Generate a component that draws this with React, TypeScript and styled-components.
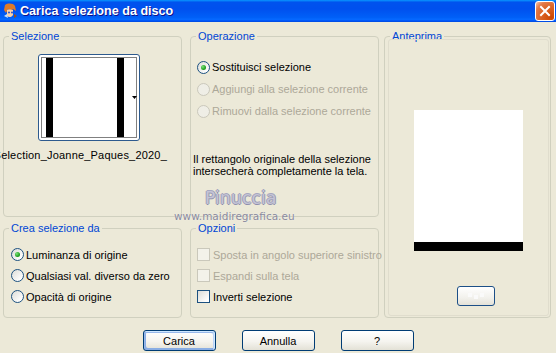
import React from 'react';
import styled, { createGlobalStyle, css } from 'styled-components';

const Global = createGlobalStyle`
  html, body { margin: 0; padding: 0; background: #ECE9D8; }
  body { font-family: "Liberation Sans", Arial, sans-serif; font-size: 11px; color: #000; }
`;

const Window = styled.div`
  position: relative;
  width: 556px;
  height: 353px;
  overflow: hidden;
  background: #ECE9D8;
  display: flex;
  flex-direction: column;
`;

const TitleBar = styled.div`
  flex: none;
  height: 22px;
  display: flex;
  align-items: center;
  padding: 0 1px 0 2px;
  background: linear-gradient(180deg, #0997ff 0%, #0053ee 10%, #0050ee 40%, #0060f8 80%, #066aff 88%, #005bff 92%, #0048dd 100%);
`;

const TitleIcon = styled.svg`
  width: 16px;
  height: 16px;
  flex: none;
`;

const TitleText = styled.span`
  margin-left: 2px;
  font-family: "Liberation Sans", Arial, sans-serif;
  font-weight: bold;
  font-size: 12.6px;
  color: #fff;
  text-shadow: 1px 1px #0f1089;
  white-space: nowrap;
`;

const CloseButton = styled.div`
  margin-left: auto;
  width: 20px;
  height: 20px;
  box-sizing: border-box;
  border: 1px solid #fff;
  border-radius: 3px;
  background: radial-gradient(circle at 85% 85%, #cc4600 0%, #dc6527 50%, #e27a4a 75%, #f3b89a 95%);
  display: flex;
  align-items: center;
  justify-content: center;
`;

const Body = styled.div`
  flex: 1;
  display: flex;
  flex-direction: column;
`;

const Panels = styled.div`
  display: grid;
  grid-template-columns: 179px 8px 189px 5px 167px;
  grid-template-rows: 187px 96px;
  row-gap: 5px;
  margin: 8px 0 0 3px;
`;

const Group = styled.fieldset<{ $col: number; $row: string }>`
  grid-column: ${p => p.$col};
  grid-row: ${p => p.$row};
  margin: 0;
  padding: 0;
  min-width: 0;
  box-sizing: border-box;
  border: 1px solid #d0d0bf;
  border-radius: 4px;
  display: flex;
  flex-direction: column;
`;

const Legend = styled.legend`
  margin-left: 5px;
  padding: 0 2px;
  color: #0046d5;
  font-size: 11px;
  line-height: 13px;
`;

const Thumb = styled.div`
  margin: 11px 0 0 34px;
  width: 102px;
  height: 87px;
  box-sizing: border-box;
  border: 1px solid #2d5a8e;
  border-radius: 3px;
  background: #fff;
  display: flex;
`;

const FileName = styled.div`
  margin-top: 8px;
  padding-right: 14px;
  display: flex;
  justify-content: flex-end;
  white-space: nowrap;
  line-height: 13px;
  letter-spacing: 0.2px;
`;

const Options = styled.div<{ $top: number; $left: number }>`
  display: flex;
  flex-direction: column;
  padding: ${p => p.$top}px 0 0 ${p => p.$left}px;
`;

const OptionRow = styled.label<{ $disabled?: boolean; $h: number }>`
  display: flex;
  align-items: center;
  height: ${p => p.$h}px;
  gap: 2px;
  color: ${p => (p.$disabled ? '#aca899' : '#000')};
  white-space: nowrap;
`;

const Radio = styled.span<{ $checked?: boolean; $disabled?: boolean }>`
  flex: none;
  width: 13px;
  height: 13px;
  box-sizing: border-box;
  border-radius: 50%;
  border: 1px solid ${p => (p.$disabled ? '#cac8bb' : '#1c5180')};
  background: ${p => (p.$disabled ? '#efeee6' : 'linear-gradient(135deg, #dcdcd7 0%, #ffffff 85%)')};
  display: flex;
  align-items: center;
  justify-content: center;
  &::after {
    content: '';
    display: ${p => (p.$checked ? 'block' : 'none')};
    width: 5px;
    height: 5px;
    border-radius: 50%;
    background: radial-gradient(circle at 35% 35%, #7ce27a 0%, #21a121 60%, #0e7e0e 100%);
  }
`;

const Check = styled.span<{ $disabled?: boolean }>`
  flex: none;
  width: 13px;
  height: 13px;
  box-sizing: border-box;
  margin-right: 1px;
  border: 1px solid ${p => (p.$disabled ? '#cac8bb' : '#1c5180')};
  background: ${p => (p.$disabled ? '#f3f2ea' : 'linear-gradient(135deg, #dcdcd7 0%, #ffffff 85%)')};
`;

const Description = styled.p`
  margin: 31px 0 0 2px;
  line-height: 12px;
`;

const PreviewPanel = styled.div`
  flex: 1;
  margin: -4px 1px 1px 3px;
  border: 1px solid #e0ddcd;
  border-radius: 3px;
  display: flex;
  flex-direction: column;
  align-items: center;
`;

const PreviewImage = styled.div`
  margin-top: 70px;
  width: 109px;
  height: 132px;
  background: #fff;
  border-bottom: 9px solid #000;
`;

const SmallButton = styled.div`
  margin: 35px 0 0 14px;
  width: 38px;
  height: 20px;
  box-sizing: border-box;
  border: 1px solid #1c4f87;
  border-radius: 3px;
  background: linear-gradient(180deg, #ffffff 0%, #f2f1ec 60%, #e4e2d8 100%);
  display: flex;
  align-items: center;
  justify-content: center;
`;

const ButtonRow = styled.div`
  margin-top: 12px;
  display: flex;
  justify-content: center;
  gap: 26px;
`;

const PushButton = styled.button<{ $default?: boolean }>`
  width: 73px;
  height: 21px;
  box-sizing: border-box;
  padding: 0;
  border: 1px solid #003c74;
  border-radius: 3px;
  background: linear-gradient(180deg, #ffffff 0%, #f5f4ef 55%, #e3e1d6 100%);
  font-family: "Liberation Sans", Arial, sans-serif;
  font-size: 11px;
  color: #000;
  ${p =>
    p.$default &&
    css`
      box-shadow: inset -1px 1px #cee7ff, inset 1px 2px #98b8ea, inset -2px 2px #bcd4f6, inset 1px -1px #89ade4, inset 2px -2px #89ade4;
    `}
`;

const WatermarkName = styled.div`
  position: absolute;
  left: 205px;
  top: 189px;
  font-family: "DejaVu Sans", sans-serif;
  font-size: 17px;
  line-height: 18px;
  letter-spacing: 0.2px;
  color: #c4c4d6;
  text-shadow: 1px 0 #9a9ab4, -1px 0 #a0a0b8, 0 1px #9090ac, 0 -1px #a8a8c0;
  pointer-events: none;
`;

const WatermarkUrl = styled.div`
  position: absolute;
  left: 174px;
  top: 210px;
  font-family: "DejaVu Sans", sans-serif;
  font-size: 10.5px;
  line-height: 12px;
  color: #8a8a9c;
  text-shadow: 0 0 1px #f4f4f4;
  pointer-events: none;
`;

export default function App() {
  return (
    <Window>
      <Global />
      <TitleBar>
        <TitleIcon viewBox="0 0 16 16">
          <path d="M3 2 C6 0 11 0 13 3 L14 8 L11 6 L9 9 L6 6 L4 10 L2 7 Z" fill="#e07a28" />
          <path d="M5 7 C7 6 10 7 11 7 L11 12 C10 14 7 15 5 13 Z" fill="#f8d2ac" />
          <circle cx="7" cy="9.5" r="1" fill="#2850c8" />
          <circle cx="10" cy="9.5" r="1" fill="#2850c8" />
          <path d="M2 13 L5 11 L6 15 Z" fill="#c8e0f8" />
          <path d="M12 11 L15 13 L12 15 Z" fill="#a05010" />
        </TitleIcon>
        <TitleText>Carica selezione da disco</TitleText>
        <CloseButton>
          <svg width="12" height="12" viewBox="0 0 12 12">
            <path d="M2 2 L10 10 M10 2 L2 10" stroke="#fff" strokeWidth="2" strokeLinecap="square" />
          </svg>
        </CloseButton>
      </TitleBar>
      <Body>
        <Panels>
          <Group $col={1} $row="1">
            <Legend>Selezione</Legend>
            <Thumb>
              <svg width="100" height="85" viewBox="0 0 100 85">
                <rect x="2.5" y="2.5" width="95" height="80" fill="#fff" stroke="#000" strokeDasharray="1 1" />
                <rect x="7" y="3" width="7" height="79" fill="#000" />
                <rect x="78" y="3" width="7" height="79" fill="#000" />
                <path d="M93 41 L98 41 L95.5 44 Z" fill="#000" />
              </svg>
            </Thumb>
            <FileName>
              <span>Selection_Joanne_Paques_2020_</span>
            </FileName>
          </Group>

          <Group $col={3} $row="1">
            <Legend>Operazione</Legend>
            <Options $top={13} $left={6}>
              <OptionRow $h={22}>
                <Radio $checked />
                <span>Sostituisci selezione</span>
              </OptionRow>
              <OptionRow $h={22} $disabled>
                <Radio $disabled />
                <span>Aggiungi alla selezione corrente</span>
              </OptionRow>
              <OptionRow $h={22} $disabled>
                <Radio $disabled />
                <span>Rimuovi dalla selezione corrente</span>
              </OptionRow>
            </Options>
            <Description>
              Il rettangolo originale della selezione
              <br />
              intersecherà completamente la tela.
            </Description>
          </Group>

          <Group $col={5} $row="1 / 3">
            <Legend>Anteprima</Legend>
            <PreviewPanel>
              <PreviewImage />
              <SmallButton>
                <svg width="20" height="10" viewBox="0 0 20 10">
                  <rect x="2" y="2" width="4" height="4" fill="#fafafa" />
                  <rect x="8" y="4" width="4" height="4" fill="#fafafa" />
                  <rect x="14" y="2" width="4" height="4" fill="#fafafa" />
                </svg>
              </SmallButton>
            </PreviewPanel>
          </Group>

          <Group $col={1} $row="2">
            <Legend>Crea selezione da</Legend>
            <Options $top={9} $left={7}>
              <OptionRow $h={21}>
                <Radio $checked />
                <span>Luminanza di origine</span>
              </OptionRow>
              <OptionRow $h={21}>
                <Radio />
                <span>Qualsiasi val. diverso da zero</span>
              </OptionRow>
              <OptionRow $h={21}>
                <Radio />
                <span>Opacità di origine</span>
              </OptionRow>
            </Options>
          </Group>

          <Group $col={3} $row="2">
            <Legend>Opzioni</Legend>
            <Options $top={9} $left={6}>
              <OptionRow $h={21} $disabled>
                <Check $disabled />
                <span>Sposta in angolo superiore sinistro</span>
              </OptionRow>
              <OptionRow $h={21} $disabled>
                <Check $disabled />
                <span>Espandi sulla tela</span>
              </OptionRow>
              <OptionRow $h={21}>
                <Check />
                <span>Inverti selezione</span>
              </OptionRow>
            </Options>
          </Group>
        </Panels>
        <ButtonRow>
          <PushButton $default>Carica</PushButton>
          <PushButton>Annulla</PushButton>
          <PushButton>?</PushButton>
        </ButtonRow>
      </Body>
      <WatermarkName>Pinuccia</WatermarkName>
      <WatermarkUrl>www.maidiregrafica.eu</WatermarkUrl>
    </Window>
  );
}
